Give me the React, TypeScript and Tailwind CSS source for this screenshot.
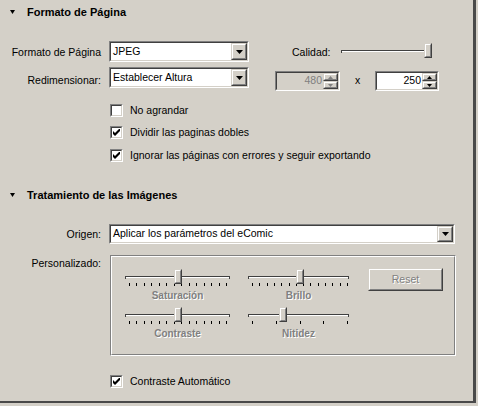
import type { CSSProperties, ReactNode } from "react";

type BoxProps = {
  className?: string;
  innerClassName?: string;
  style?: CSSProperties;
  children?: ReactNode;
};

// classic 3D edges: sunken fields and raised buttons
const Sunken = ({ className = "", innerClassName = "", style, children }: BoxProps) => (
  <div
    className={`border border-t-[#808080] border-l-[#808080] border-r-white border-b-white ${className}`}
    style={style}
  >
    <div
      className={`h-full w-full border border-t-[#404040] border-l-[#404040] border-r-[#d4d0c8] border-b-[#d4d0c8] ${innerClassName}`}
    >
      {children}
    </div>
  </div>
);

const Raised = ({ className = "", innerClassName = "", style, children }: BoxProps) => (
  <div
    className={`border border-t-[#d4d0c8] border-l-[#d4d0c8] border-r-[#404040] border-b-[#404040] ${className}`}
    style={style}
  >
    <div
      className={`h-full w-full border border-t-white border-l-white border-r-[#808080] border-b-[#808080] bg-[#d4d0c8] ${innerClassName}`}
    >
      {children}
    </div>
  </div>
);

const Arrow = ({ up = false, size = 7, color = "#000" }: { up?: boolean; size?: number; color?: string }) => {
  const h = Math.ceil(size / 2);
  return (
    <svg width={size} height={h} viewBox={`0 0 ${size} ${h}`} className="block">
      <polygon
        points={up ? `0,${h} ${size},${h} ${size / 2},0` : `0,0 ${size},0 ${size / 2},${h}`}
        fill={color}
      />
    </svg>
  );
};

const Header = ({ title }: { title: string }) => (
  <div className="flex h-[16px] items-center pl-[10px]">
    <svg width="5" height="4" viewBox="0 0 5 4" className="block">
      <polygon points="0,0 5,0 2.5,4" fill="#000" />
    </svg>
    <span className="ml-[12px] text-[11px] font-bold leading-[16px]">{title}</span>
  </div>
);

const Select = ({ value, className = "" }: { value: string; className?: string }) => (
  <Sunken className={className} innerClassName="flex items-stretch bg-white">
    <span className="flex flex-1 items-center pl-[2px]">{value}</span>
    <Raised className="w-[16px]" innerClassName="flex items-center justify-center">
      <Arrow />
    </Raised>
  </Sunken>
);

const Spin = ({ value, width, disabled = false }: { value: string; width: string; disabled?: boolean }) => (
  <Sunken
    className={`h-[20px] ${width}`}
    innerClassName={`flex items-stretch ${disabled ? "bg-[#d4d0c8]" : "bg-white"}`}
  >
    <span
      className={`flex flex-1 items-center justify-end pr-[1px] ${
        disabled ? "text-[#808080]" : "text-black"
      }`}
    >
      {value}
    </span>
    <div className="flex w-[15px] flex-col">
      <Raised className="h-[8px]" innerClassName="flex items-center justify-center">
        <Arrow up size={5} color={disabled ? "#808080" : "#000"} />
      </Raised>
      <Raised className="h-[8px]" innerClassName="flex items-center justify-center">
        <Arrow size={5} color={disabled ? "#808080" : "#000"} />
      </Raised>
    </div>
  </Sunken>
);

const Check = ({ label, checked = false, className = "" }: { label: string; checked?: boolean; className?: string }) => (
  <div className={`flex h-[13px] items-center ${className}`}>
    <Sunken className="h-[13px] w-[13px]" innerClassName="flex items-center justify-center bg-white">
      {checked && (
        <svg width="7" height="7" viewBox="0 0 7 7" className="block">
          <path d="M0 2L2 4L7 -1V2L2 7L0 5Z" fill="#000" />
        </svg>
      )}
    </Sunken>
    <span className="ml-[7px] leading-[13px]">{label}</span>
  </div>
);

const spread = (count: number, from: number, to: number) =>
  Array.from({ length: count }, (_, i) => Math.round(from + ((to - from) * i) / (count - 1)));

const Slider = ({ className = "", thumb, ticks = [] }: { className?: string; thumb: number; ticks?: number[] }) => (
  <div className={`relative h-[18px] ${className}`}>
    <div className="absolute left-0 right-0 top-[7px] h-[2px] border-t border-t-[#404040] border-b border-b-white" />
    <div className="absolute left-0 top-[7px] h-[3px] w-px bg-[#404040]" />
    <div className="absolute right-0 top-[7px] h-[3px] w-px bg-[#404040]" />
    {ticks.map((x) => (
      <div key={x} className="absolute top-[14px] h-[3px] w-px bg-black" style={{ left: x }} />
    ))}
    <Raised className="absolute top-0 h-[15px] w-[8px]" style={{ left: thumb }} />
  </div>
);

const Disabled = ({ children, className = "" }: { children: ReactNode; className?: string }) => (
  <span className={`text-[#808080] [text-shadow:1px_1px_0_#ffffff] ${className}`}>{children}</span>
);

const SliderCell = ({ label, thumb, ticks }: { label: string; thumb: number; ticks: number[] }) => (
  <div className="flex flex-col items-center">
    <Slider className="w-full" thumb={thumb} ticks={ticks} />
    <Disabled className="mt-[3px] text-[10px] font-bold leading-[12px]">{label}</Disabled>
  </div>
);

export default function App() {
  return (
    <div className="h-[406px] w-[478px] bg-[#d4d0c8] font-['Liberation_Sans',Arial,sans-serif] text-[10.5px] text-black">
      <div className="h-[403px] w-[476px] border-r-[3px] border-b-[2px] border-[#4a4a4a] pt-[4px]">
        <Header title="Formato de Página" />

        <div className="mt-[21px] flex h-[21px] items-center">
          <span className="w-[101px] pt-[2px] text-right">Formato de Página</span>
          <Select value="JPEG" className="ml-[8px] h-[21px] w-[140px]" />
          <span className="ml-[43px] w-[38px] pt-[2px]">Calidad:</span>
          <Slider className="ml-[11px] w-[91px]" thumb={83} />
        </div>

        <div className="mt-[5px] flex items-start">
          <span className="mt-[4px] flex h-[20px] w-[101px] items-center justify-end">Redimensionar:</span>
          <Select value="Establecer Altura" className="ml-[8px] h-[21px] w-[140px]" />
          <div className="ml-[26px] mt-[4px] flex items-center">
            <Spin value="480" width="w-[65px]" disabled />
            <span className="w-[35px] text-center">x</span>
            <Spin value="250" width="w-[64px]" />
          </div>
        </div>

        <div className="mt-[13px] flex flex-col pl-[110px]">
          <Check label="No agrandar" />
          <Check label="Dividir las paginas dobles" checked className="mt-[9px]" />
          <Check label="Ignorar las páginas con errores y seguir exportando" checked className="mt-[10px]" />
        </div>

        <div className="mt-[25px]">
          <Header title="Tratamiento de las Imágenes" />
        </div>

        <div className="mt-[21px] flex h-[20px] items-center">
          <span className="w-[101px] pt-[2px] text-right">Origen:</span>
          <Select value="Aplicar los parámetros del eComic" className="ml-[8px] h-[20px] w-[346px]" />
        </div>

        <div className="mt-[11px] flex items-start">
          <span className="w-[101px] pt-[1px] text-right leading-[14px]">Personalizado:</span>
          {/* etched group box */}
          <div className="ml-[9px] h-[101px] w-[346px] border border-t-[#808080] border-l-[#808080] border-r-white border-b-white">
            <div className="h-full w-full border border-t-white border-l-white border-r-[#808080] border-b-[#808080]">
              <div className="flex pl-[13px] pt-[11px]">
                <div className="mt-[1px] grid grid-cols-[105px_101px] gap-x-[18px] gap-y-[5px]">
                  <SliderCell label="Saturación" thumb={49} ticks={spread(14, 4, 101)} />
                  <SliderCell label="Brillo" thumb={48} ticks={spread(14, 4, 99)} />
                  <SliderCell label="Contraste" thumb={49} ticks={spread(14, 4, 101)} />
                  <SliderCell label="Nitidez" thumb={31} ticks={spread(5, 4, 99)} />
                </div>
                <Raised className="ml-[19px] h-[23px] w-[75px]" innerClassName="flex items-center justify-center">
                  <Disabled>Reset</Disabled>
                </Raised>
              </div>
            </div>
          </div>
        </div>

        <div className="mt-[19px] pl-[110px]">
          <Check label="Contraste Automático" checked />
        </div>
      </div>
    </div>
  );
}
